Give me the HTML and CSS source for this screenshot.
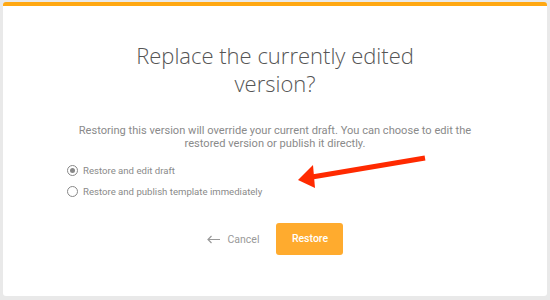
FILE: index.html
```html
<!DOCTYPE html>
<html>
<head>
    <title>Restore version</title>
    <link rel="stylesheet" href="styles.css">
</head>
<body>
    <div class="modal">
        <h2 class="title">Replace the currently edited<br>version?</h2>
        <p class="desc">Restoring this version will override your current draft. You can choose to edit the<br>restored version or publish it directly.</p>

        <div class="options">
            <label class="option"><span class="radio checked"></span>Restore and edit draft</label>
            <label class="option"><span class="radio"></span>Restore and publish template immediately</label>
        </div>

        <div class="actions">
            <div class="cancel">
                <svg class="back" width="13" height="9" viewBox="0 0 13 9">
                    <path d="M13 4.5H1.5M4.5 1L1 4.5L4.5 8" fill="none" stroke="#999" stroke-width="1.2"/>
                </svg>
                Cancel
            </div>
            <div class="restore">Restore</div>
        </div>

        <svg class="pointer" width="140" height="40" viewBox="0 0 140 40">
            <line x1="127" y1="4" x2="14" y2="23" stroke="#ff2a00" stroke-width="5"/>
            <polygon points="0,26 15,11 17,34" fill="#ff2a00"/>
        </svg>
    </div>
</body>
</html>
```

FILE: styles.css
```css
body {
    margin: 0;
    background-color: #e9e9e9;
    font-family: 'Roboto', sans-serif;
}
.modal {
    position: relative;
    margin: 2px 3px 0 3px;
    height: 290px;
    background-color: #fff;
    border-top: 4px solid #ffa812;
    border-radius: 3px;
    text-align: center;
}
.title {
    margin: 0;
    padding-top: 35px;
    font-family: 'Open Sans', sans-serif;
    font-weight: 300;
    font-size: 22px;
    line-height: 28px;
    color: #555;
}
.desc {
    margin: 27px 0 0 0;
    font-size: 11.1px;
    line-height: 13px;
    color: #8a8a8a;
}
.options {
    display: flex;
    flex-direction: column;
    gap: 10px;
    margin: 15px 0 0 64px;
    text-align: left;
}
.option {
    display: flex;
    align-items: center;
    gap: 5px;
    height: 11px;
    font-size: 9.6px;
    line-height: 11px;
    color: #8a8a8a;
}
.radio {
    box-sizing: border-box;
    width: 11px;
    height: 11px;
    border: 1px solid #888;
    border-radius: 50%;
    position: relative;
}
.radio.checked::after {
    content: '';
    position: absolute;
    left: 2px;
    top: 2px;
    width: 5px;
    height: 5px;
    border-radius: 50%;
    background-color: #888;
}
.actions {
    display: flex;
    justify-content: center;
    align-items: center;
    gap: 17px;
    margin-top: 26px;
}
.cancel {
    display: flex;
    align-items: center;
    gap: 8px;
    font-size: 10.5px;
    color: #999;
}
.restore {
    width: 67px;
    height: 32px;
    line-height: 32px;
    background-color: #ffab2e;
    border-radius: 3px;
    color: #fff;
    font-size: 10.5px;
    font-weight: 500;
}
.pointer {
    position: absolute;
    left: 295px;
    top: 148px;
}
```
